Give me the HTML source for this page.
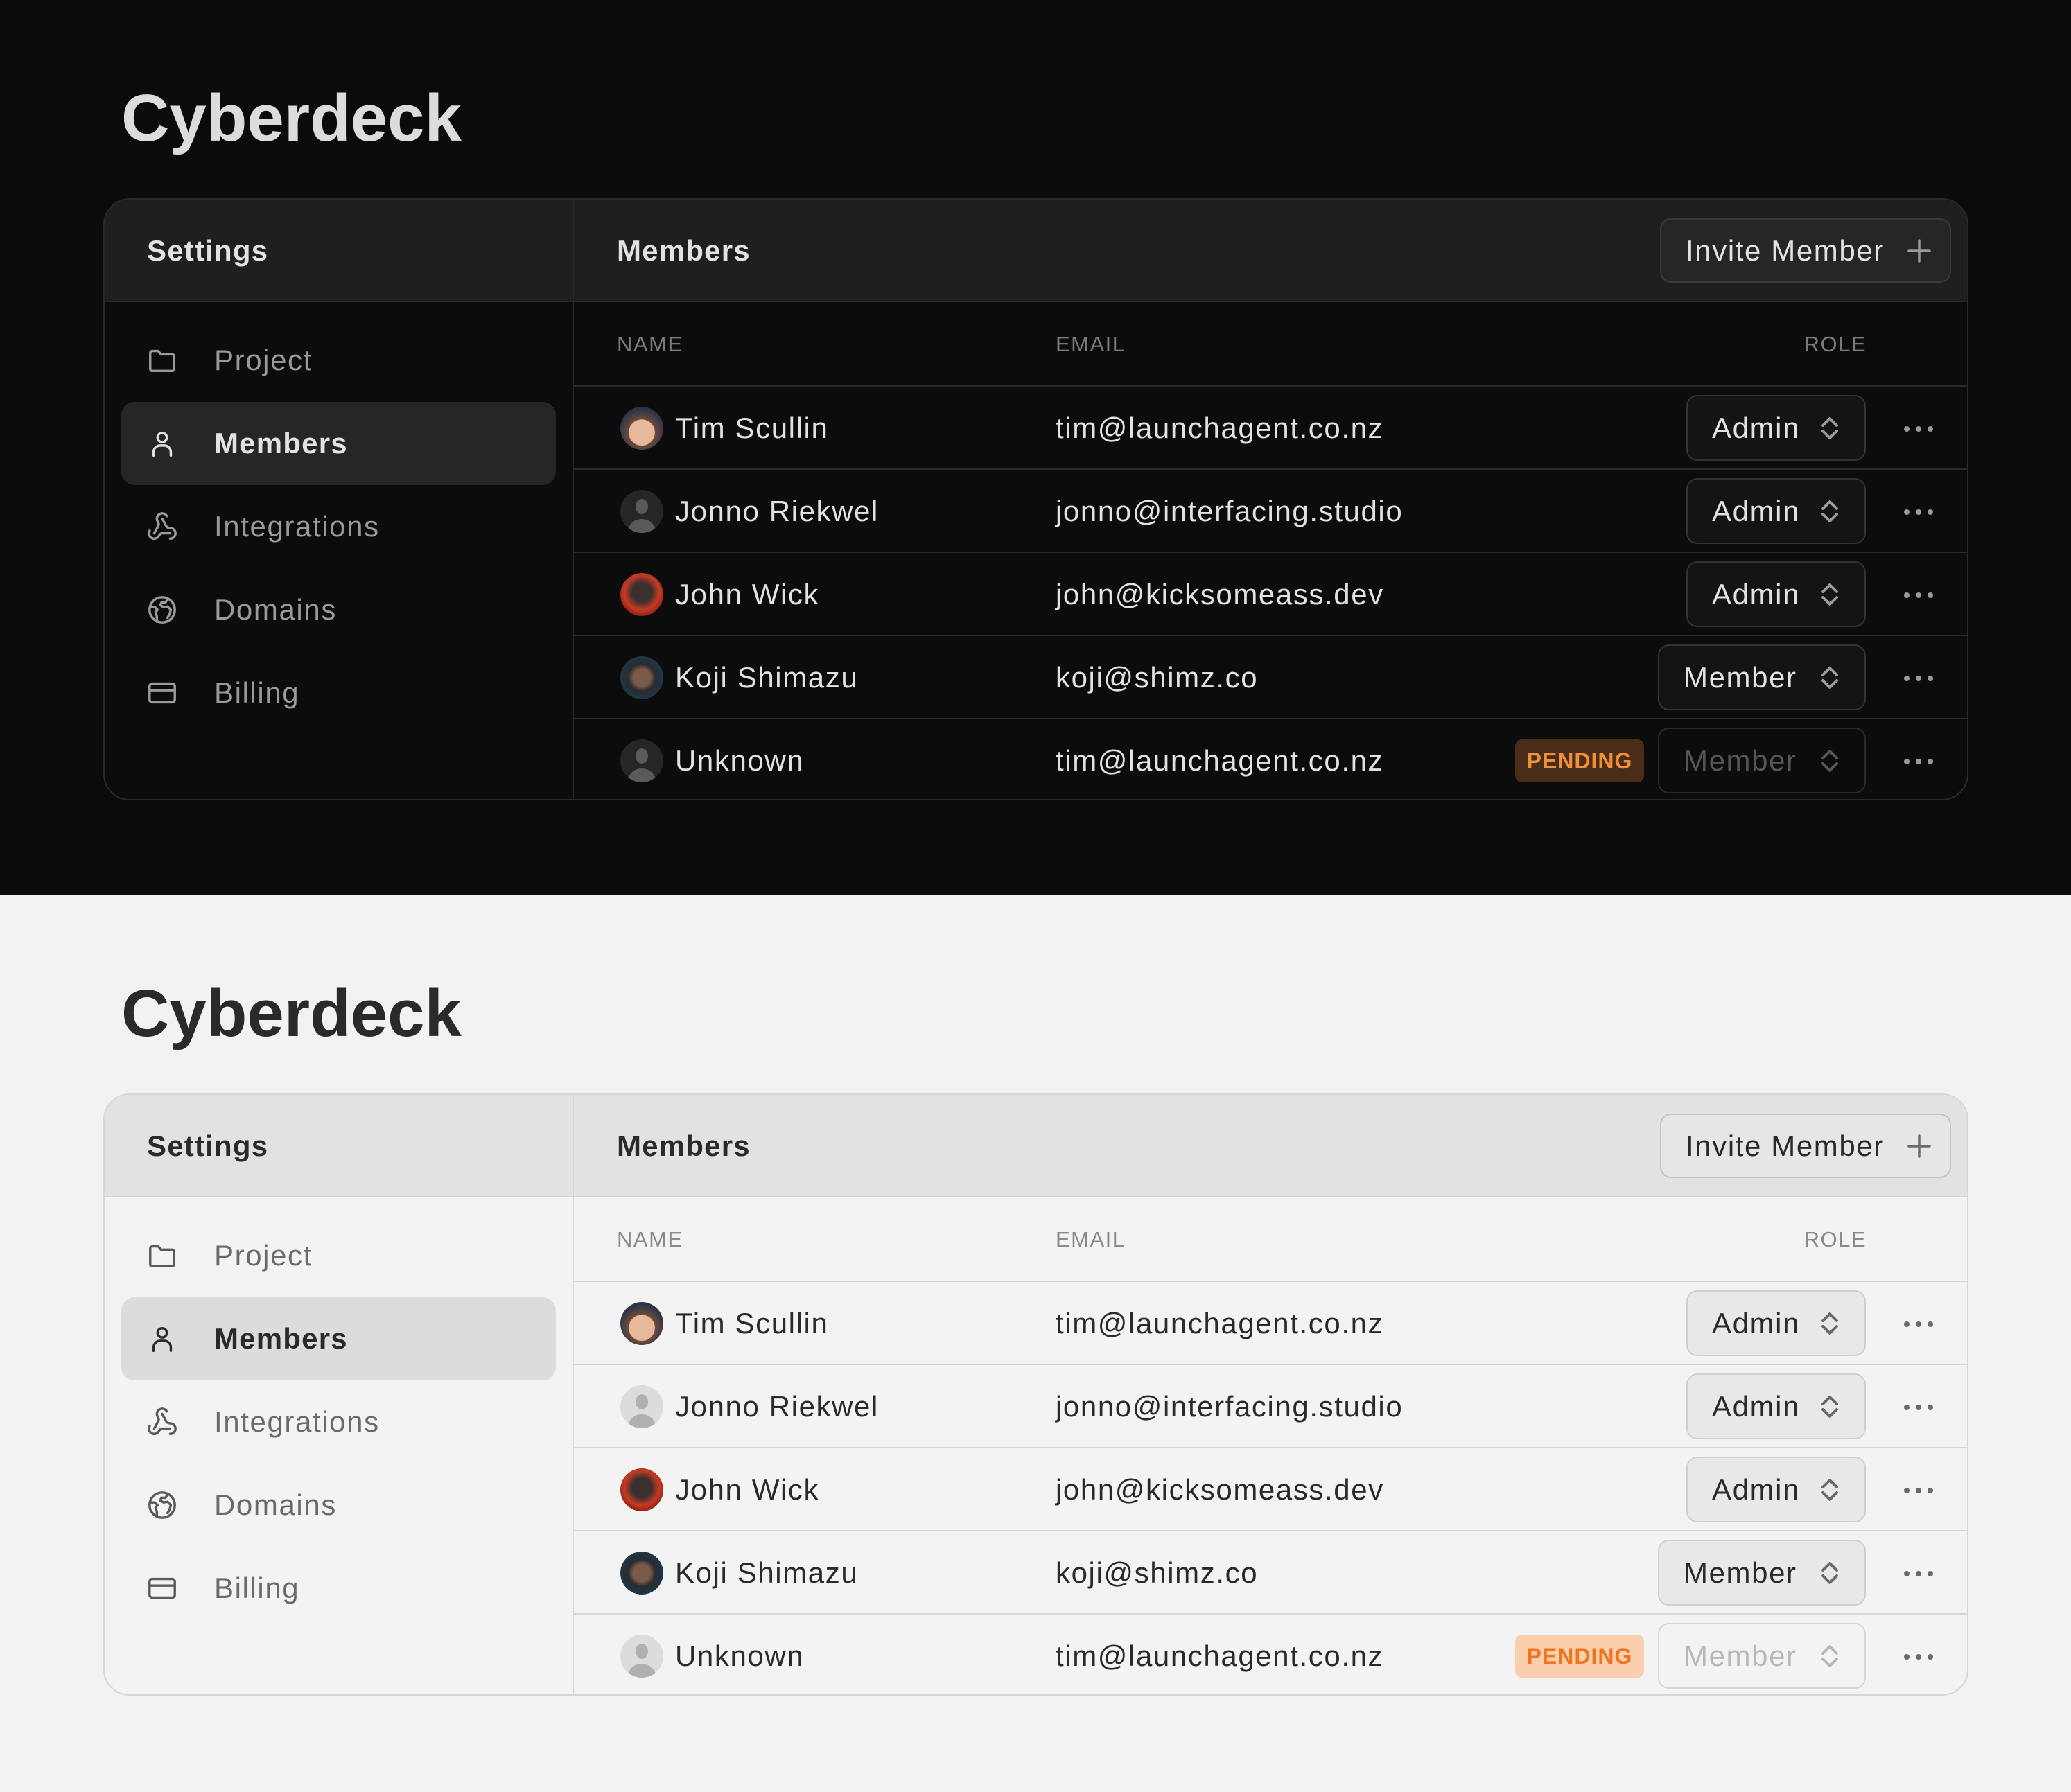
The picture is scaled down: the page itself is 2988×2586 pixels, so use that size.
<!DOCTYPE html>
<html><head><meta charset="utf-8">
<style>
*{box-sizing:border-box;margin:0;padding:0}
body{width:2988px;height:2586px;font-family:"Liberation Sans",Arial,sans-serif;overflow:hidden}
.sec{position:relative;width:2988px;height:1292px;background:var(--bg)}
.sec.l{height:1294px}
.d{--bg:#0b0b0b;--card:#0c0c0c;--head:#1f1f1f;--bd:#2a2a2a;--act:#262626;--tx:#e2e2e2;--t2:#9a9a9a;--t3:#7a7a7a;--sel:#141414;--selbd:#333;--pbg:#4a2d18;--ptx:#f0913a;--btn:#262626;--btnbd:#3a3a3a;--dis:#555;--title:#dcdcdc;--ic:#9a9a9a;--avf:#5a5a5a}
.l{--bg:#f2f2f2;--card:#f3f3f3;--head:#e2e2e2;--bd:#d6d6d6;--act:#dcdcdc;--tx:#2a2a2a;--t2:#6a6a6a;--t3:#8a8a8a;--sel:#e8e8e8;--selbd:#cfcfcf;--pbg:#fbcfae;--ptx:#ef7420;--btn:#e6e6e6;--btnbd:#c4c4c4;--dis:#b8b8b8;--title:#2a2a2a;--ic:#5a5a5a;--avf:#b0b0b0}
.title{position:absolute;left:175px;top:119px;height:104px;line-height:104px;font-size:96px;font-weight:bold;color:var(--title);letter-spacing:0}
.card{position:absolute;left:149px;top:286px;width:2691px;height:869px;border:2px solid var(--bd);border-radius:38px;background:var(--card);overflow:hidden}
.head{position:absolute;left:0;top:0;right:0;height:148px;background:var(--head);border-bottom:2px solid var(--bd)}
.vdiv{position:absolute;left:675px;top:0;bottom:0;width:2px;background:var(--bd)}
.t{position:absolute;height:60px;line-height:60px;white-space:nowrap;color:var(--tx);font-size:42px;letter-spacing:1.6px}
.nav{position:absolute;left:24px;width:627px;height:120px;border-radius:19px}
.nav.a{background:var(--act)}
.nav svg{position:absolute;left:36px;top:37px;width:46px;height:46px}
.nav span{position:absolute;left:134px;top:30px;height:60px;line-height:60px;font-size:42px;color:var(--t2);letter-spacing:1.6px}
.nav.a span{color:var(--tx);font-weight:bold;letter-spacing:1.2px}
.btn{position:absolute;left:2244px;top:27px;width:420px;height:93px;border:2px solid var(--btnbd);border-radius:16px;background:var(--btn)}
.row{position:absolute;left:677px;right:0;height:120px;border-top:2px solid var(--bd)}
.th{position:absolute;top:179px;height:60px;line-height:60px;font-size:31px;color:var(--t3);letter-spacing:1.5px}
.av{position:absolute;left:67px;top:29px;width:62px;height:62px;border-radius:50%;overflow:hidden}
.sel{position:absolute;top:12px;right:146px;height:95px;border:2px solid var(--selbd);border-radius:16px;background:var(--sel)}
.sel span{position:absolute;top:16px;height:60px;line-height:60px;font-size:42px;color:var(--tx);letter-spacing:1.6px}
.sel svg{position:absolute;right:30px;top:26px;width:40px;height:40px}
.dots{position:absolute;right:48px;top:56px;width:44px;height:10px}
.pend{position:absolute;left:1358px;top:29px;width:186px;height:62px;border-radius:10px;background:var(--pbg);color:var(--ptx);font-weight:bold;font-size:32px;line-height:62px;text-align:center;letter-spacing:1px}
</style></head><body>

<div class="sec d">
<div class="title">Cyberdeck</div>
<div class="card">
 <div class="head"></div>
 <div class="vdiv"></div>
 <div class="t" style="left:61px;top:44px;font-weight:bold;letter-spacing:1.2px">Settings</div>
 <div class="t" style="left:739px;top:44px;font-weight:bold;letter-spacing:1.2px">Members</div>
 <div class="btn"><div class="t" style="left:35px;top:15px">Invite Member</div>
  <svg style="position:absolute;right:26px;top:27px" width="36" height="36" viewBox="0 0 36 36"><path d="M18 3v30M3 18h30" stroke="var(--t2)" stroke-width="3.5" stroke-linecap="round"/></svg></div>

 <div class="nav" style="top:172px"><svg viewBox="0 0 24 24" fill="none" stroke="var(--ic)" stroke-width="1.8" stroke-linejoin="round"><path d="M3 6.5a1.5 1.5 0 0 1 1.5-1.5h4.5l2 2.5h8.5a1.5 1.5 0 0 1 1.5 1.5v9.5a1.5 1.5 0 0 1-1.5 1.5h-15A1.5 1.5 0 0 1 3 18.5z"/></svg><span>Project</span></div>
 <div class="nav a" style="top:292px"><svg viewBox="0 0 24 24" fill="none" stroke="var(--tx)" stroke-width="1.8" stroke-linecap="round"><circle cx="12" cy="7.5" r="3.5"/><path d="M5.5 21v-2.5a5 5 0 0 1 5-5h3a5 5 0 0 1 5 5V21"/></svg><span>Members</span></div>
 <div class="nav" style="top:412px"><svg viewBox="0 0 24 24" fill="none" stroke="var(--ic)" stroke-width="1.8" stroke-linecap="round" stroke-linejoin="round"><path d="M18 16.98h-5.99c-1.1 0-1.95.94-2.48 1.9A4 4 0 0 1 2 17c.01-.7.2-1.4.57-2"/><path d="m6 17 3.13-5.78c.53-.97.1-2.18-.5-3.1a4 4 0 1 1 6.89-4.06"/><path d="m12 6 3.13 5.73C15.66 12.7 16.9 13 18 13a4 4 0 0 1 0 8"/></svg><span>Integrations</span></div>
 <div class="nav" style="top:532px"><svg viewBox="0 0 24 24" fill="none" stroke="var(--ic)" stroke-width="1.8" stroke-linecap="round" stroke-linejoin="round"><circle cx="12" cy="12" r="9.5"/><path d="M3 10h3.5l2 2-1.5 2 1 3v4M16 4l-1.5 2.5h-3l-1 2 2.5 1.5 3-.5 2.5 2.5-1 3.5-1.5 2.5"/></svg><span>Domains</span></div>
 <div class="nav" style="top:652px"><svg viewBox="0 0 24 24" fill="none" stroke="var(--ic)" stroke-width="1.8" stroke-linejoin="round"><rect x="2.5" y="5" width="19" height="14" rx="2"/><path d="M2.5 10h19"/></svg><span>Billing</span></div>

 <div class="th" style="left:739px">NAME</div>
 <div class="th" style="left:1372px">EMAIL</div>
 <div class="th" style="right:145px;text-align:right">ROLE</div>

 <div class="row" style="top:268px">
  <div class="av" style="background:radial-gradient(circle at 50% 60%,#e8b89a 0 38%,#6a4a3a 40%,#2b3548 70%)"></div>
  <div class="t" style="left:146px;top:30px">Tim Scullin</div><div class="t" style="left:695px;top:30px">tim@launchagent.co.nz</div>
  <div class="sel" style="width:259px"><span style="left:35px">Admin</span><svg viewBox="0 0 20 20" fill="none" stroke="var(--t2)" stroke-width="2" stroke-linecap="round" stroke-linejoin="round"><path d="M5 8l5-5 5 5M5 12l5 5 5-5"/></svg></div>
  <svg class="dots" viewBox="0 0 44 10"><circle cx="5" cy="5" r="4" fill="var(--t2)"/><circle cx="22" cy="5" r="4" fill="var(--t2)"/><circle cx="39" cy="5" r="4" fill="var(--t2)"/></svg>
 </div>
 <div class="row" style="top:388px">
  <div class="av" style="background:var(--act)"><svg width="62" height="62" viewBox="0 0 62 62"><ellipse cx="31" cy="24" rx="9" ry="11" fill="var(--avf)"/><path d="M10 62c2-14 11-20 21-20s19 6 21 20z" fill="var(--avf)"/></svg></div>
  <div class="t" style="left:146px;top:30px">Jonno Riekwel</div><div class="t" style="left:695px;top:30px">jonno@interfacing.studio</div>
  <div class="sel" style="width:259px"><span style="left:35px">Admin</span><svg viewBox="0 0 20 20" fill="none" stroke="var(--t2)" stroke-width="2" stroke-linecap="round" stroke-linejoin="round"><path d="M5 8l5-5 5 5M5 12l5 5 5-5"/></svg></div>
  <svg class="dots" viewBox="0 0 44 10"><circle cx="5" cy="5" r="4" fill="var(--t2)"/><circle cx="22" cy="5" r="4" fill="var(--t2)"/><circle cx="39" cy="5" r="4" fill="var(--t2)"/></svg>
 </div>
 <div class="row" style="top:508px">
  <div class="av" style="background:radial-gradient(circle at 50% 45%,#3a3030 0 30%,#c83a24 55%,#7a1a10 80%)"></div>
  <div class="t" style="left:146px;top:30px">John Wick</div><div class="t" style="left:695px;top:30px">john@kicksomeass.dev</div>
  <div class="sel" style="width:259px"><span style="left:35px">Admin</span><svg viewBox="0 0 20 20" fill="none" stroke="var(--t2)" stroke-width="2" stroke-linecap="round" stroke-linejoin="round"><path d="M5 8l5-5 5 5M5 12l5 5 5-5"/></svg></div>
  <svg class="dots" viewBox="0 0 44 10"><circle cx="5" cy="5" r="4" fill="var(--t2)"/><circle cx="22" cy="5" r="4" fill="var(--t2)"/><circle cx="39" cy="5" r="4" fill="var(--t2)"/></svg>
 </div>
 <div class="row" style="top:628px">
  <div class="av" style="background:radial-gradient(circle at 50% 50%,#7a5a4a 0 28%,#2a2a30 45%,#1c3a4a 75%)"></div>
  <div class="t" style="left:146px;top:30px">Koji Shimazu</div><div class="t" style="left:695px;top:30px">koji@shimz.co</div>
  <div class="sel" style="width:300px"><span style="left:35px">Member</span><svg viewBox="0 0 20 20" fill="none" stroke="var(--t2)" stroke-width="2" stroke-linecap="round" stroke-linejoin="round"><path d="M5 8l5-5 5 5M5 12l5 5 5-5"/></svg></div>
  <svg class="dots" viewBox="0 0 44 10"><circle cx="5" cy="5" r="4" fill="var(--t2)"/><circle cx="22" cy="5" r="4" fill="var(--t2)"/><circle cx="39" cy="5" r="4" fill="var(--t2)"/></svg>
 </div>
 <div class="row" style="top:748px">
  <div class="av" style="background:var(--act)"><svg width="62" height="62" viewBox="0 0 62 62"><ellipse cx="31" cy="24" rx="9" ry="11" fill="var(--avf)"/><path d="M10 62c2-14 11-20 21-20s19 6 21 20z" fill="var(--avf)"/></svg></div>
  <div class="t" style="left:146px;top:30px">Unknown</div><div class="t" style="left:695px;top:30px">tim@launchagent.co.nz</div>
  <div class="pend">PENDING</div>
  <div class="sel" style="width:300px;background:transparent;border-color:var(--bd)"><span style="left:35px;color:var(--dis)">Member</span><svg viewBox="0 0 20 20" fill="none" stroke="var(--dis)" stroke-width="2" stroke-linecap="round" stroke-linejoin="round"><path d="M5 8l5-5 5 5M5 12l5 5 5-5"/></svg></div>
  <svg class="dots" viewBox="0 0 44 10"><circle cx="5" cy="5" r="4" fill="var(--t2)"/><circle cx="22" cy="5" r="4" fill="var(--t2)"/><circle cx="39" cy="5" r="4" fill="var(--t2)"/></svg>
 </div>
</div>
</div>

<div class="sec l">
<div class="title">Cyberdeck</div>
<div class="card">
 <div class="head"></div>
 <div class="vdiv"></div>
 <div class="t" style="left:61px;top:44px;font-weight:bold;letter-spacing:1.2px">Settings</div>
 <div class="t" style="left:739px;top:44px;font-weight:bold;letter-spacing:1.2px">Members</div>
 <div class="btn"><div class="t" style="left:35px;top:15px">Invite Member</div>
  <svg style="position:absolute;right:26px;top:27px" width="36" height="36" viewBox="0 0 36 36"><path d="M18 3v30M3 18h30" stroke="var(--t2)" stroke-width="3.5" stroke-linecap="round"/></svg></div>

 <div class="nav" style="top:172px"><svg viewBox="0 0 24 24" fill="none" stroke="var(--ic)" stroke-width="1.8" stroke-linejoin="round"><path d="M3 6.5a1.5 1.5 0 0 1 1.5-1.5h4.5l2 2.5h8.5a1.5 1.5 0 0 1 1.5 1.5v9.5a1.5 1.5 0 0 1-1.5 1.5h-15A1.5 1.5 0 0 1 3 18.5z"/></svg><span>Project</span></div>
 <div class="nav a" style="top:292px"><svg viewBox="0 0 24 24" fill="none" stroke="var(--tx)" stroke-width="1.8" stroke-linecap="round"><circle cx="12" cy="7.5" r="3.5"/><path d="M5.5 21v-2.5a5 5 0 0 1 5-5h3a5 5 0 0 1 5 5V21"/></svg><span>Members</span></div>
 <div class="nav" style="top:412px"><svg viewBox="0 0 24 24" fill="none" stroke="var(--ic)" stroke-width="1.8" stroke-linecap="round" stroke-linejoin="round"><path d="M18 16.98h-5.99c-1.1 0-1.95.94-2.48 1.9A4 4 0 0 1 2 17c.01-.7.2-1.4.57-2"/><path d="m6 17 3.13-5.78c.53-.97.1-2.18-.5-3.1a4 4 0 1 1 6.89-4.06"/><path d="m12 6 3.13 5.73C15.66 12.7 16.9 13 18 13a4 4 0 0 1 0 8"/></svg><span>Integrations</span></div>
 <div class="nav" style="top:532px"><svg viewBox="0 0 24 24" fill="none" stroke="var(--ic)" stroke-width="1.8" stroke-linecap="round" stroke-linejoin="round"><circle cx="12" cy="12" r="9.5"/><path d="M3 10h3.5l2 2-1.5 2 1 3v4M16 4l-1.5 2.5h-3l-1 2 2.5 1.5 3-.5 2.5 2.5-1 3.5-1.5 2.5"/></svg><span>Domains</span></div>
 <div class="nav" style="top:652px"><svg viewBox="0 0 24 24" fill="none" stroke="var(--ic)" stroke-width="1.8" stroke-linejoin="round"><rect x="2.5" y="5" width="19" height="14" rx="2"/><path d="M2.5 10h19"/></svg><span>Billing</span></div>

 <div class="th" style="left:739px">NAME</div>
 <div class="th" style="left:1372px">EMAIL</div>
 <div class="th" style="right:145px;text-align:right">ROLE</div>

 <div class="row" style="top:268px">
  <div class="av" style="background:radial-gradient(circle at 50% 60%,#e8b89a 0 38%,#6a4a3a 40%,#2b3548 70%)"></div>
  <div class="t" style="left:146px;top:30px">Tim Scullin</div><div class="t" style="left:695px;top:30px">tim@launchagent.co.nz</div>
  <div class="sel" style="width:259px"><span style="left:35px">Admin</span><svg viewBox="0 0 20 20" fill="none" stroke="var(--t2)" stroke-width="2" stroke-linecap="round" stroke-linejoin="round"><path d="M5 8l5-5 5 5M5 12l5 5 5-5"/></svg></div>
  <svg class="dots" viewBox="0 0 44 10"><circle cx="5" cy="5" r="4" fill="var(--t2)"/><circle cx="22" cy="5" r="4" fill="var(--t2)"/><circle cx="39" cy="5" r="4" fill="var(--t2)"/></svg>
 </div>
 <div class="row" style="top:388px">
  <div class="av" style="background:var(--act)"><svg width="62" height="62" viewBox="0 0 62 62"><ellipse cx="31" cy="24" rx="9" ry="11" fill="var(--avf)"/><path d="M10 62c2-14 11-20 21-20s19 6 21 20z" fill="var(--avf)"/></svg></div>
  <div class="t" style="left:146px;top:30px">Jonno Riekwel</div><div class="t" style="left:695px;top:30px">jonno@interfacing.studio</div>
  <div class="sel" style="width:259px"><span style="left:35px">Admin</span><svg viewBox="0 0 20 20" fill="none" stroke="var(--t2)" stroke-width="2" stroke-linecap="round" stroke-linejoin="round"><path d="M5 8l5-5 5 5M5 12l5 5 5-5"/></svg></div>
  <svg class="dots" viewBox="0 0 44 10"><circle cx="5" cy="5" r="4" fill="var(--t2)"/><circle cx="22" cy="5" r="4" fill="var(--t2)"/><circle cx="39" cy="5" r="4" fill="var(--t2)"/></svg>
 </div>
 <div class="row" style="top:508px">
  <div class="av" style="background:radial-gradient(circle at 50% 45%,#3a3030 0 30%,#c83a24 55%,#7a1a10 80%)"></div>
  <div class="t" style="left:146px;top:30px">John Wick</div><div class="t" style="left:695px;top:30px">john@kicksomeass.dev</div>
  <div class="sel" style="width:259px"><span style="left:35px">Admin</span><svg viewBox="0 0 20 20" fill="none" stroke="var(--t2)" stroke-width="2" stroke-linecap="round" stroke-linejoin="round"><path d="M5 8l5-5 5 5M5 12l5 5 5-5"/></svg></div>
  <svg class="dots" viewBox="0 0 44 10"><circle cx="5" cy="5" r="4" fill="var(--t2)"/><circle cx="22" cy="5" r="4" fill="var(--t2)"/><circle cx="39" cy="5" r="4" fill="var(--t2)"/></svg>
 </div>
 <div class="row" style="top:628px">
  <div class="av" style="background:radial-gradient(circle at 50% 50%,#7a5a4a 0 28%,#2a2a30 45%,#1c3a4a 75%)"></div>
  <div class="t" style="left:146px;top:30px">Koji Shimazu</div><div class="t" style="left:695px;top:30px">koji@shimz.co</div>
  <div class="sel" style="width:300px"><span style="left:35px">Member</span><svg viewBox="0 0 20 20" fill="none" stroke="var(--t2)" stroke-width="2" stroke-linecap="round" stroke-linejoin="round"><path d="M5 8l5-5 5 5M5 12l5 5 5-5"/></svg></div>
  <svg class="dots" viewBox="0 0 44 10"><circle cx="5" cy="5" r="4" fill="var(--t2)"/><circle cx="22" cy="5" r="4" fill="var(--t2)"/><circle cx="39" cy="5" r="4" fill="var(--t2)"/></svg>
 </div>
 <div class="row" style="top:748px">
  <div class="av" style="background:var(--act)"><svg width="62" height="62" viewBox="0 0 62 62"><ellipse cx="31" cy="24" rx="9" ry="11" fill="var(--avf)"/><path d="M10 62c2-14 11-20 21-20s19 6 21 20z" fill="var(--avf)"/></svg></div>
  <div class="t" style="left:146px;top:30px">Unknown</div><div class="t" style="left:695px;top:30px">tim@launchagent.co.nz</div>
  <div class="pend">PENDING</div>
  <div class="sel" style="width:300px;background:transparent;border-color:var(--bd)"><span style="left:35px;color:var(--dis)">Member</span><svg viewBox="0 0 20 20" fill="none" stroke="var(--dis)" stroke-width="2" stroke-linecap="round" stroke-linejoin="round"><path d="M5 8l5-5 5 5M5 12l5 5 5-5"/></svg></div>
  <svg class="dots" viewBox="0 0 44 10"><circle cx="5" cy="5" r="4" fill="var(--t2)"/><circle cx="22" cy="5" r="4" fill="var(--t2)"/><circle cx="39" cy="5" r="4" fill="var(--t2)"/></svg>
 </div>
</div>
</div>
</body></html>
